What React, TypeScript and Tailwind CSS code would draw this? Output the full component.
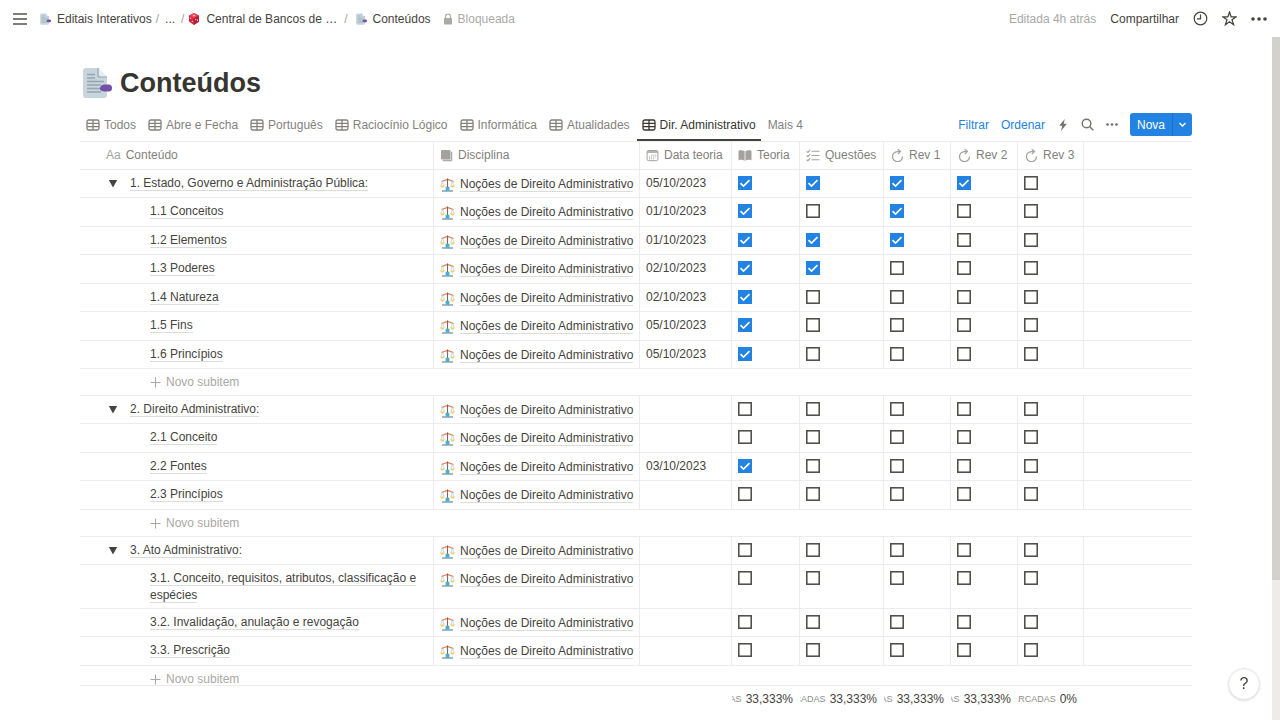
import type { ReactNode } from "react";

type Row = { name: string; parent?: boolean; date?: string; checks: number[] };
type Group = { id: string; rows: Row[] };

const groups: Group[] = [
  {
    id: "g1",
    rows: [
      { name: "1. Estado, Governo e Administração Pública:", parent: true, date: "05/10/2023", checks: [1, 1, 1, 1, 0] },
      { name: "1.1 Conceitos", date: "01/10/2023", checks: [1, 0, 1, 0, 0] },
      { name: "1.2 Elementos", date: "01/10/2023", checks: [1, 1, 1, 0, 0] },
      { name: "1.3 Poderes", date: "02/10/2023", checks: [1, 1, 0, 0, 0] },
      { name: "1.4 Natureza", date: "02/10/2023", checks: [1, 0, 0, 0, 0] },
      { name: "1.5 Fins", date: "05/10/2023", checks: [1, 0, 0, 0, 0] },
      { name: "1.6 Princípios", date: "05/10/2023", checks: [1, 0, 0, 0, 0] },
    ],
  },
  {
    id: "g2",
    rows: [
      { name: "2. Direito Administrativo:", parent: true, checks: [0, 0, 0, 0, 0] },
      { name: "2.1 Conceito", checks: [0, 0, 0, 0, 0] },
      { name: "2.2 Fontes", date: "03/10/2023", checks: [1, 0, 0, 0, 0] },
      { name: "2.3 Princípios", checks: [0, 0, 0, 0, 0] },
    ],
  },
  {
    id: "g3",
    rows: [
      { name: "3. Ato Administrativo:", parent: true, checks: [0, 0, 0, 0, 0] },
      { name: "3.1. Conceito, requisitos, atributos, classificação e espécies", checks: [0, 0, 0, 0, 0] },
      { name: "3.2. Invalidação, anulação e revogação", checks: [0, 0, 0, 0, 0] },
      { name: "3.3. Prescrição", checks: [0, 0, 0, 0, 0] },
    ],
  },
];

const checkLabels = ["Teoria", "Questões", "Rev 1", "Rev 2", "Rev 3"];
const tabs = ["Todos", "Abre e Fecha", "Português", "Raciocínio Lógico", "Informática", "Atualidades", "Dir. Administrativo"];
const totals = ["33,333%", "33,333%", "33,333%", "33,333%", "0%"];

function PageIcon({ className }: { className: string }) {
  return (
    <svg viewBox="0 0 32 32" className={className} aria-hidden="true">
      <path d="M6 1h12l9 9v18a3 3 0 0 1-3 3H6a3 3 0 0 1-3-3V4a3 3 0 0 1 3-3z" fill="#c9d5dc" />
      <path d="M18 1l9 9h-7a2 2 0 0 1-2-2z" fill="#e6edf1" />
      <path d="M18 1v7a2 2 0 0 0 2 2h7" fill="none" stroke="#92a5b1" strokeWidth="1.2" />
      <path d="M7 7.500h8M7 11h8M7 14.500h17M7 18h14M7 21.500h13M7 25h14" stroke="#92a5b1" strokeWidth="1.300" />
      <path d="M20 20.500q1.500-3 4.500-3h4q3.500 0 3.500 3.500t-3.500 3.500h-4q-3 0-4.500-2z" fill="#7450a8" />
    </svg>
  );
}

function DiceIcon() {
  return (
    <svg viewBox="0 0 12 14" className="h-3.5 w-3 shrink-0" aria-hidden="true">
      <path d="M6 1l5 2.600v5.800L6 13 1 9.400V3.600z" fill="#d3243d" />
      <path d="M6 1l5 2.600L6 6.200 1 3.600z" fill="#e84a5f" />
      <path d="M6 6.200l5-2.600v5.800L6 13z" fill="#b91c33" />
      <g fill="#fff">
        <circle cx="6" cy="3.500" r=".8" />
        <circle cx="2.600" cy="6.200" r=".6" />
        <circle cx="4.300" cy="9.300" r=".6" />
        <circle cx="7.700" cy="7.500" r=".6" />
        <circle cx="9.500" cy="8.200" r=".6" />
      </g>
    </svg>
  );
}

function TableIcon() {
  return (
    <svg viewBox="0 0 14 14" className="size-3.5 shrink-0" fill="none" stroke="currentColor" strokeWidth="1.300" aria-hidden="true">
      <rect x="1" y="2" width="12" height="10" rx="1.800" />
      <path d="M1 5.300h12M1 8.700h12M7 2v10" />
    </svg>
  );
}

function StackIcon() {
  return (
    <svg viewBox="0 0 13 13" className="size-[13px] shrink-0" fill="currentColor" aria-hidden="true">
      <rect x="1" y="1" width="9.500" height="9.500" rx="1" />
      <path d="M11.300 3H12v8a1 1 0 0 1-1 1H3v-.8h7.300a1 1 0 0 0 1-1z" stroke="currentColor" strokeWidth=".5" />
    </svg>
  );
}

function CalendarIcon() {
  return (
    <svg viewBox="0 0 13 13" className="size-[13px] shrink-0" fill="none" stroke="currentColor" aria-hidden="true">
      <rect x="1.100" y="1.500" width="10.800" height="10.200" rx="1.500" strokeWidth="1" />
      <path d="M1.100 3h10.800" strokeWidth="1.600" />
      <path d="M5.500 6.200h5M3 8h7.500M3 9.800h5" strokeWidth="1" strokeDasharray="1 .9" />
    </svg>
  );
}

function BookIcon() {
  return (
    <svg viewBox="0 0 14 13" className="h-[13px] w-3.5 shrink-0" fill="currentColor" aria-hidden="true">
      <path d="M.5 1.800C2.800 1 5 1.200 6.600 2.300v9.500C5 10.700 2.800 10.600.5 11.300zM13.500 1.800C11.200 1 9 1.200 7.400 2.300v9.500c1.600-1.100 3.800-1.200 6.100-.5z" />
    </svg>
  );
}

function ChecklistIcon() {
  return (
    <svg viewBox="0 0 14 13" className="h-[13px] w-3.5 shrink-0" fill="none" stroke="currentColor" strokeWidth="1.100" aria-hidden="true">
      <path d="M5.500 2.300h8M5.500 6.500h8M5.500 10.700h8M.7 2.300l1.200 1.200L4 .8M.7 6.500l1.200 1.200L4 5M.7 10.700l1.200 1.200L4 9.200" />
    </svg>
  );
}

function RepeatIcon() {
  return (
    <svg viewBox="0 0 13 13" className="size-[13px] shrink-0" fill="none" stroke="currentColor" strokeWidth="1.300" aria-hidden="true">
      <path d="M9.200 2.600H6.300a5 5 0 1 0 5.200 5M6.800.1l2.600 2.500-2.600 2.500" />
    </svg>
  );
}

function ScaleIcon() {
  return (
    <svg viewBox="0 0 15 14" className="h-3.5 w-[15px] shrink-0" aria-hidden="true">
      <path d="M1.500 3.300C4 3.300 5 1.700 7.500 1.700s3.500 1.600 6 1.600" fill="none" stroke="#e07f52" strokeWidth="1.200" />
      <path d="M7.500.4v9" stroke="#8f5f55" strokeWidth="1.100" />
      <path d="M2.500 3.300L.8 8M2.500 3.300L4.200 8M12.500 3.300L10.800 8M12.500 3.300L14.200 8" stroke="#a9cbd8" strokeWidth=".7" />
      <path d="M.2 7.600h4.600q-.4 2.100-2.300 2.100T.2 7.600zM10.200 7.600h4.600q-.4 2.100-2.300 2.100t-2.300-2.100z" fill="#f8cf58" />
      <path d="M5.600 8.700h3.800v3.800H5.600z" fill="#45aed6" />
      <path d="M2 12.400h11v1.200H2z" fill="#5d8da2" />
    </svg>
  );
}

function DotsIcon({ className }: { className: string }) {
  return (
    <svg viewBox="0 0 16 4" className={className} fill="currentColor" aria-hidden="true">
      <circle cx="2" cy="2" r="1.800" />
      <circle cx="8" cy="2" r="1.800" />
      <circle cx="14" cy="2" r="1.800" />
    </svg>
  );
}

function Head({ icon, children, pad = "pl-1.5" }: { icon: ReactNode; children: ReactNode; pad?: string }) {
  return (
    <th scope="col" className="h-7 border-r border-b border-[#ececeb] p-0 pb-px text-left font-normal">
      <span className={`flex items-center gap-[5px] whitespace-nowrap ${pad}`}>
        <span className="flex text-[#a3a29e]">{icon}</span>
        {children}
      </span>
    </th>
  );
}

function Check({ checked, label }: { checked: boolean; label: string }) {
  return (
    <label className="grid size-3.5">
      <input type="checkbox" defaultChecked={checked} aria-label={label} className="peer col-start-1 row-start-1 size-3.5 appearance-none checked:bg-[#2383e2]" />
      <svg viewBox="0 0 14 14" className="pointer-events-none col-start-1 row-start-1 size-3.5 peer-checked:hidden" aria-hidden="true">
        <rect x=".8" y=".8" width="12.400" height="12.400" fill="none" stroke="#4a4843" strokeWidth="1.500" />
      </svg>
      <svg viewBox="0 0 14 14" className="pointer-events-none col-start-1 row-start-1 hidden size-3.5 peer-checked:block" aria-hidden="true">
        <path d="M2.500 7.100l3 3 6-6" fill="none" stroke="#fff" strokeWidth="1.600" />
      </svg>
    </label>
  );
}

function Columns() {
  return (
    <colgroup>
      <col className="w-[354px]" />
      <col className="w-[206px]" />
      <col className="w-[92px]" />
      <col className="w-[68px]" />
      <col className="w-[84px]" />
      <col className="w-[67px]" />
      <col className="w-[67px]" />
      <col className="w-[66px]" />
      <col />
    </colgroup>
  );
}

const cell = "border-r border-b border-[#ececeb] p-0 align-top";

function TopBar() {
  return (
    <header className="flex h-[37px] shrink-0 items-center justify-between pr-[13px] pl-[13px]">
      <nav aria-label="Caminho" className="flex items-center whitespace-nowrap">
        <button type="button" aria-label="Menu" className="mr-3 text-[#55534e]">
          <svg viewBox="0 0 14 12" className="h-3 w-3.5" stroke="currentColor" strokeWidth="1.300" aria-hidden="true">
            <path d="M0 1h14M0 6h14M0 11h14" />
          </svg>
        </button>
        <a href="#editais" className="flex items-center gap-1.5">
          <PageIcon className="size-3" />
          Editais Interativos
        </a>
        <span className="mx-1 text-[#a3a29e]">/</span>
        <a href="#mais" className="mx-0.5">...</a>
        <span className="mx-1 text-[#a3a29e]">/</span>
        <a href="#central" className="flex items-center gap-1.5">
          <DiceIcon />
          Central de Bancos de …
        </a>
        <span className="mx-[7px] text-[#a3a29e]">/</span>
        <a href="#conteudos" className="flex items-center gap-1.5">
          <PageIcon className="size-3" />
          Conteúdos
        </a>
        <span className="ml-3 flex items-center gap-[5px] text-[#aaa9a6]">
          <svg viewBox="0 0 10 12" className="h-3 w-2.5" aria-hidden="true">
            <path d="M2.500 6V3.500a2.500 2.500 0 0 1 5 0V6" fill="none" stroke="currentColor" strokeWidth="1.200" />
            <rect x="1" y="5" width="8" height="6.500" rx="1" fill="currentColor" />
          </svg>
          Bloqueada
        </span>
      </nav>
      <div className="flex items-center gap-3.5 whitespace-nowrap">
        <span className="text-[#a9a8a5]">Editada 4h atrás</span>
        <button type="button">Compartilhar</button>
        <button type="button" aria-label="Atualizações">
          <svg viewBox="0 0 15 15" className="size-[15px]" fill="none" stroke="currentColor" strokeWidth="1.200" aria-hidden="true">
            <circle cx="7.500" cy="7.500" r="6.300" />
            <path d="M7.500 3.500v4.300H4" />
          </svg>
        </button>
        <button type="button" aria-label="Favoritar">
          <svg viewBox="0 0 15 15" className="size-[15px]" fill="none" stroke="currentColor" strokeWidth="1.200" aria-hidden="true">
            <path d="M7.500 1l1.600 4.800h5L10 8.800l1.600 4.900-4.100-3-4.100 3L5 8.800l-4.100-3h5z" />
          </svg>
        </button>
        <button type="button" aria-label="Mais opções">
          <DotsIcon className="h-1 w-4" />
        </button>
      </div>
    </header>
  );
}

function ViewBar() {
  return (
    <div className="flex h-[34px] shrink-0 items-stretch justify-between border-b border-[#ececeb] whitespace-nowrap">
      <div role="tablist" aria-label="Visualizações" className="flex items-stretch gap-0.5 text-[#83817c]">
        {tabs.map((tab, i) => {
          const active = i === tabs.length - 1;
          return (
            <button
              key={tab}
              type="button"
              role="tab"
              aria-selected={active}
              className={active ? "flex items-center gap-1 border-b-2 border-[#45433e] px-[5px] pt-0.5 text-[#37352f]" : "flex items-center gap-1 px-[5px] first:pl-1.5"}
            >
              <TableIcon />
              {tab}
            </button>
          );
        })}
        <button type="button" className="px-[5px]">Mais 4</button>
      </div>
      <div className="flex items-center gap-3 text-[#73716c]">
        <button type="button" className="text-[#2383e2]">Filtrar</button>
        <button type="button" className="text-[#2383e2]">Ordenar</button>
        <button type="button" aria-label="Automações">
          <svg viewBox="0 0 12 14" className="h-3.5 w-3" fill="currentColor" aria-hidden="true">
            <path d="M7.800 1L2.200 7.700h3L4 13l5.800-7.200H6.700z" />
          </svg>
        </button>
        <button type="button" aria-label="Buscar">
          <svg viewBox="0 0 13 13" className="size-[13px]" fill="none" stroke="currentColor" strokeWidth="1.400" aria-hidden="true">
            <circle cx="5.500" cy="5.500" r="4.300" />
            <path d="M8.600 8.600l3.700 3.700" />
          </svg>
        </button>
        <button type="button" aria-label="Opções da visualização">
          <DotsIcon className="h-[3px] w-3" />
        </button>
        <div className="flex h-[23px] overflow-hidden rounded-[3px] bg-[#2383e2] text-white">
          <button type="button" className="border-r border-[#1d70c4] px-[7px]">Nova</button>
          <button type="button" aria-label="Modelos" className="px-[5px]">
            <svg viewBox="0 0 9 9" className="size-[9px]" fill="none" stroke="currentColor" strokeWidth="1.400" aria-hidden="true">
              <path d="M1.500 3l3 3 3-3" />
            </svg>
          </button>
        </div>
      </div>
    </div>
  );
}

export default function App() {
  return (
    <div className="flex h-screen flex-col overflow-hidden bg-white font-['Liberation_Sans',Arial,sans-serif] text-xs text-[#45433e]">
      <TopBar />
      <div className="flex min-h-0 flex-1">
        <main className="flex min-w-0 flex-1 flex-col pr-20 pl-20">
          <div className="mt-7 mb-[7px] flex h-9 shrink-0 items-center gap-2">
            <PageIcon className="size-8" />
            <h1 className="text-[27px] leading-9 font-bold text-[#37352f]">Conteúdos</h1>
          </div>
          <ViewBar />
          <div className="min-h-0 flex-1 overflow-y-auto [scrollbar-width:none]">
            <table className="w-full table-fixed border-separate border-spacing-0 leading-[17px]">
              <Columns />
              <thead className="text-[#83817c]">
                <tr>
                  <Head pad="pl-[26px]" icon={<span className="text-xs">Aa</span>}>Conteúdo</Head>
                  <Head icon={<StackIcon />}>Disciplina</Head>
                  <Head icon={<CalendarIcon />}>Data teoria</Head>
                  <Head icon={<BookIcon />}>Teoria</Head>
                  <Head icon={<ChecklistIcon />}>Questões</Head>
                  <Head pad="pl-[7px]" icon={<RepeatIcon />}>Rev 1</Head>
                  <Head pad="pl-[7px]" icon={<RepeatIcon />}>Rev 2</Head>
                  <Head pad="pl-[7px]" icon={<RepeatIcon />}>Rev 3</Head>
                  <td className="border-b border-[#ececeb]" />
                </tr>
              </thead>
              {groups.map((group) => (
                <tbody key={group.id}>
                  {group.rows.map((row) => (
                    <tr key={row.name} className="odd:h-7 even:h-[29px]">
                      <td className={cell}>
                        <div className={row.parent ? "flex items-start gap-3 pt-[5px] pb-1 pl-7" : "pt-[5px] pr-3 pb-1 pl-[70px]"}>
                          {row.parent && (
                            <button type="button" aria-label="Recolher" className="flex h-[17px] items-center">
                              <svg viewBox="0 0 10 8" className="h-2 w-2.5" fill="#45433e" aria-hidden="true">
                                <path d="M.8 0h8.400L5 7.500z" />
                              </svg>
                            </button>
                          )}
                          <span className="min-w-0">
                            <span className="border-b border-[#dddcda]">{row.name}</span>
                          </span>
                        </div>
                      </td>
                      <td className={cell}>
                        <a href="#direito-administrativo" className="flex items-center gap-[5px] pt-1.5 pb-1 pl-1.5 whitespace-nowrap">
                          <ScaleIcon />
                          <span>
                            <span className="border-b border-[#dddcda]">Noções de Direito Administrativo</span>
                          </span>
                        </a>
                      </td>
                      <td className={cell}>
                        <div className="pt-[5px] pl-1.5">{row.date}</div>
                      </td>
                      {row.checks.map((value, i) => (
                        <td key={checkLabels[i]} className={cell}>
                          <div className="pt-1.5 pl-1.5">
                            <Check checked={value === 1} label={`${checkLabels[i]}: ${row.name}`} />
                          </div>
                        </td>
                      ))}
                      <td className="border-b border-[#ececeb]" />
                    </tr>
                  ))}
                  <tr>
                    <td colSpan={9} className="h-[27px] border-b border-[#ececeb] p-0">
                      <button type="button" className="ml-[70px] flex items-center gap-[5px] text-[#a9a8a5]">
                        <svg viewBox="0 0 11 11" className="size-[11px]" stroke="currentColor" strokeWidth="1.100" aria-hidden="true">
                          <path d="M5.500 .5v10M.5 5.500h10" />
                        </svg>
                        Novo subitem
                      </button>
                    </td>
                  </tr>
                </tbody>
              ))}
            </table>
          </div>
          <table className="w-full shrink-0 table-fixed border-separate border-spacing-0">
            <Columns />
            <tbody>
              <tr>
                <td colSpan={3} className="border-t border-[#ececeb]" />
                {totals.map((total, i) => (
                  <td key={checkLabels[i]} className="h-[35px] overflow-hidden border-t border-[#ececeb] p-0 pb-2">
                    <div className="flex items-center justify-end gap-1 overflow-hidden pr-[7px]">
                      <span className="text-[9px] text-[#8f8e8a]">MARCADAS</span>
                      <span>{total}</span>
                    </div>
                  </td>
                ))}
                <td className="border-t border-[#ececeb]" />
              </tr>
            </tbody>
          </table>
        </main>
        <div className="w-2 shrink-0 bg-[#edece9]" aria-hidden="true">
          <div className="h-[79.5%] bg-[#d3d1cb]" />
        </div>
      </div>
      <button type="button" aria-label="Ajuda" className="fixed right-5 bottom-5 size-8 rounded-full border border-[#e6e5e3] bg-white text-base shadow-sm">
        ?
      </button>
    </div>
  );
}
